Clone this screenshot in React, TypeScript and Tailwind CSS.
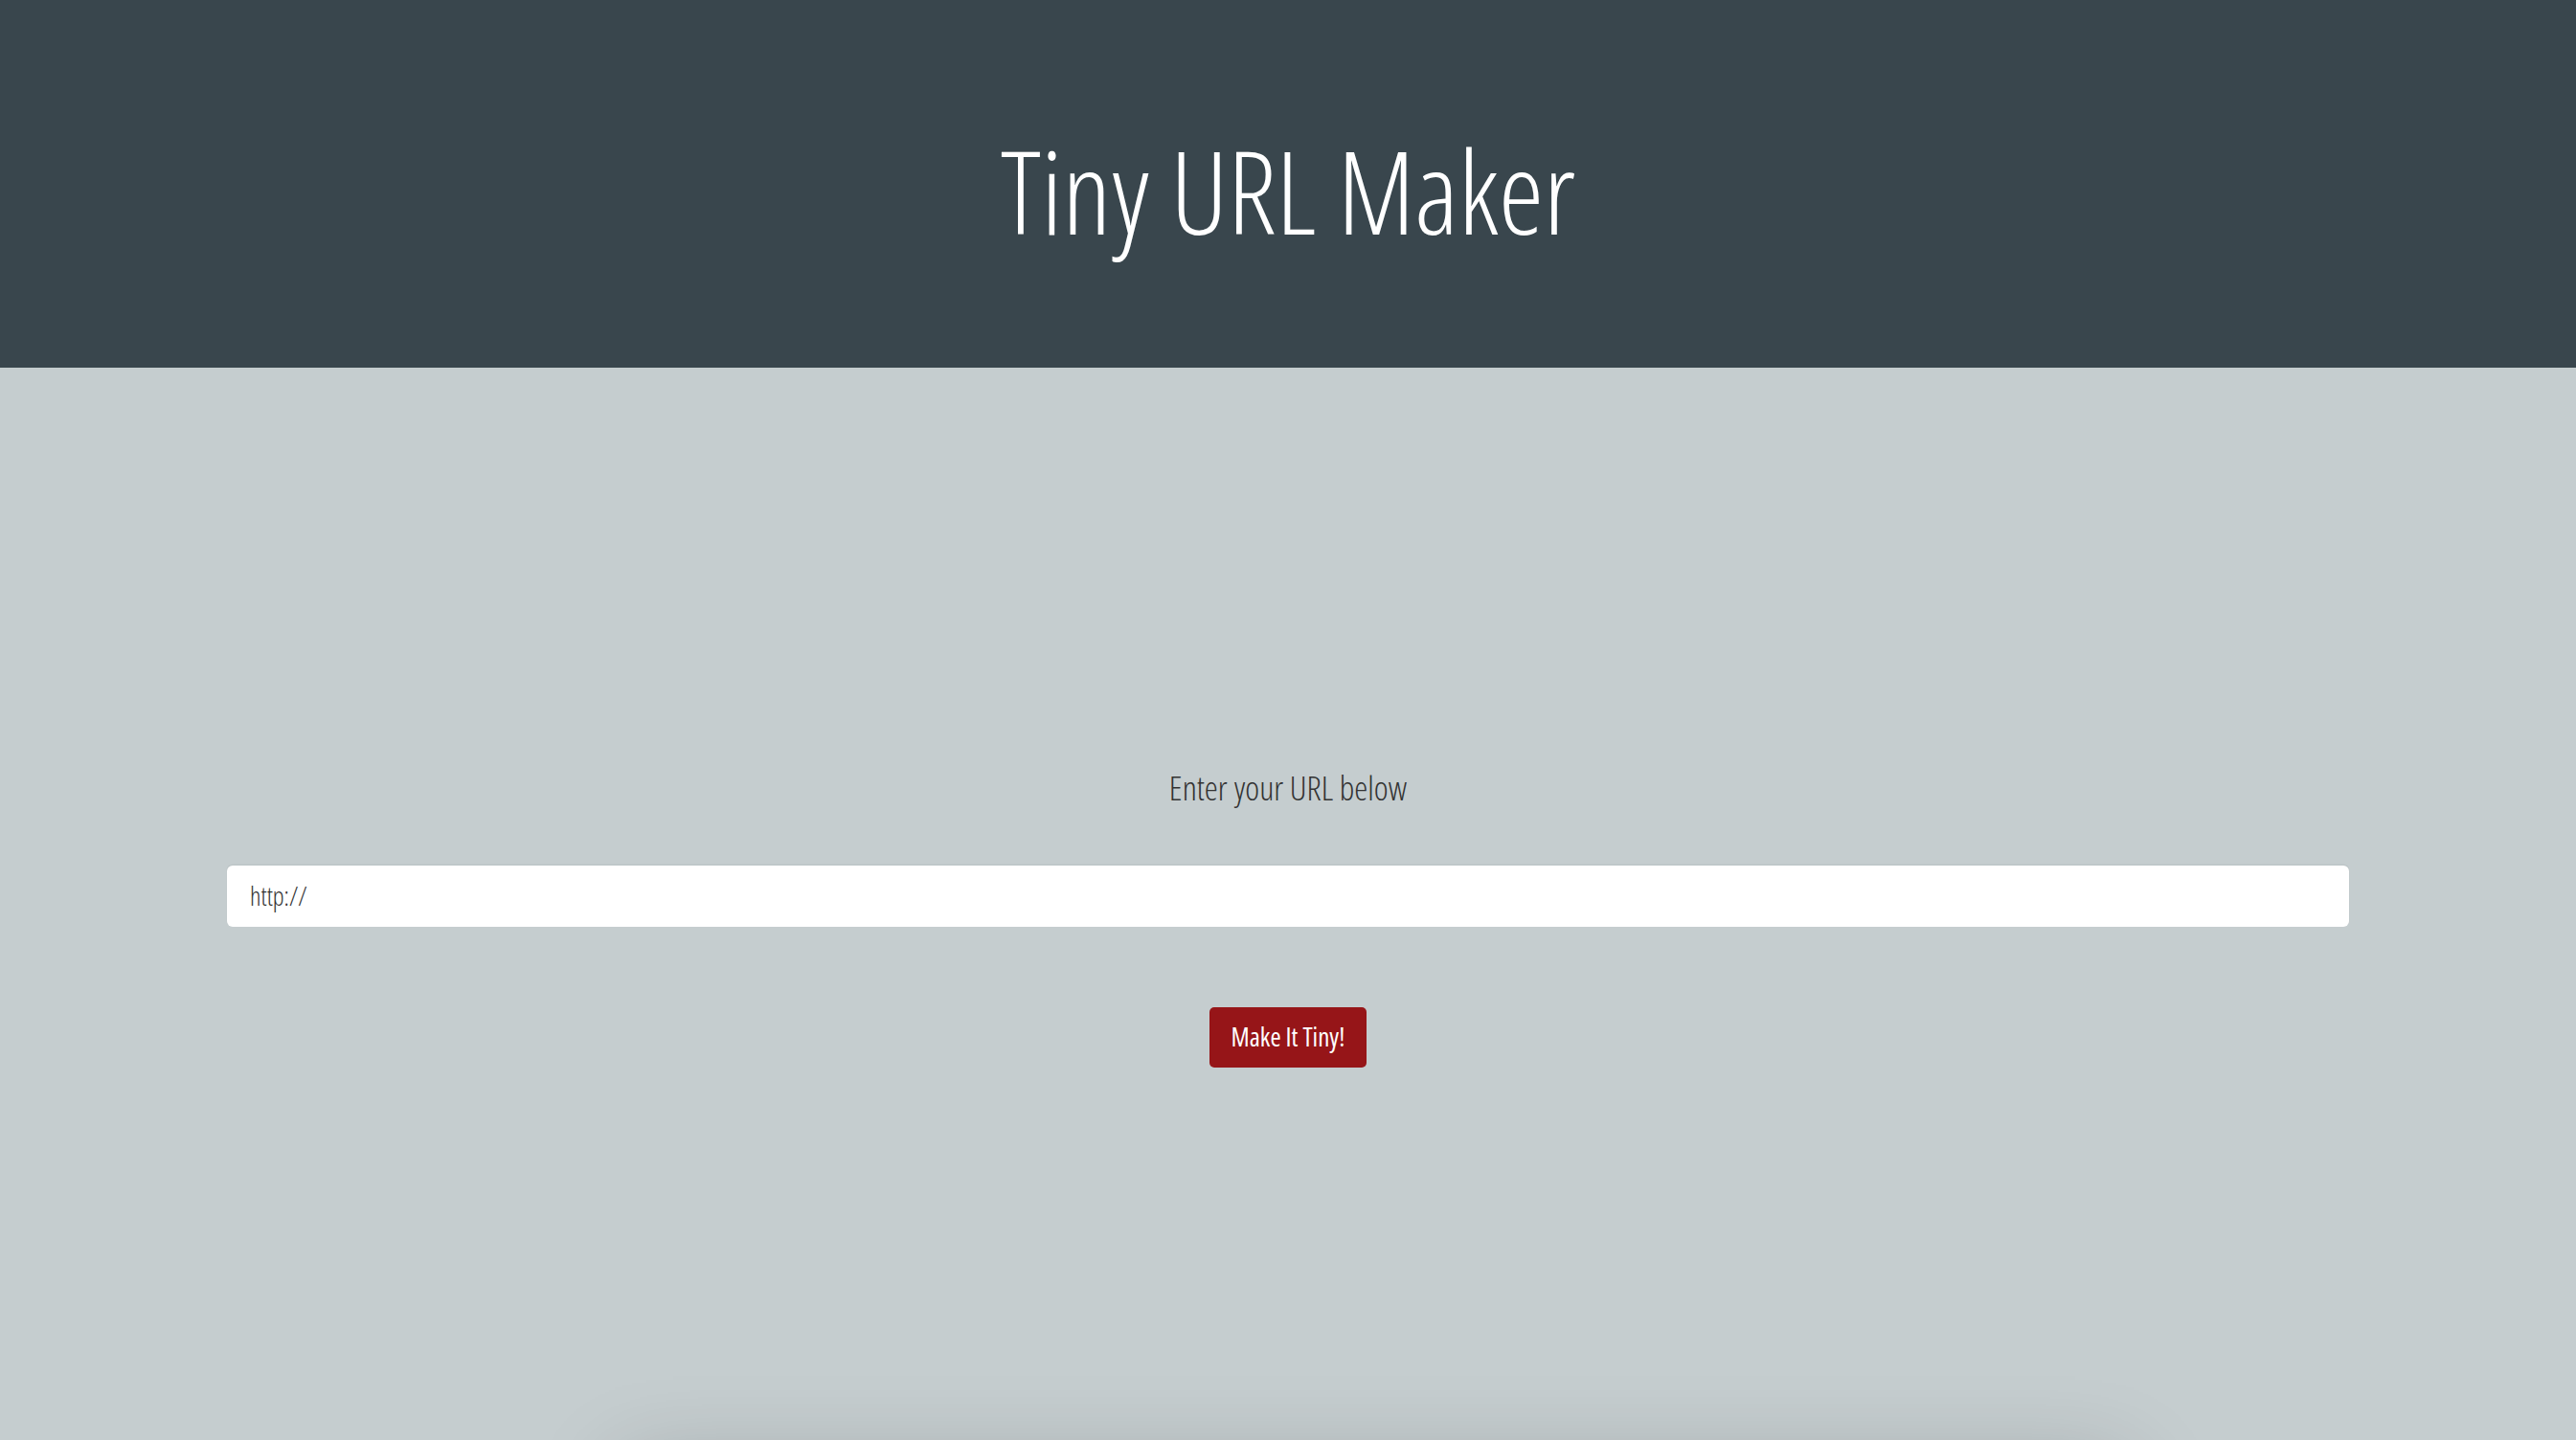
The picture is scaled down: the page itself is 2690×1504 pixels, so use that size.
export default function App() {
  return (
    <div
      className="min-h-screen overflow-hidden bg-[#c5cdcf]"
      style={{ fontFamily: '"Open Sans", "Liberation Sans", sans-serif', fontStretch: "75%" }}
    >
      <header className="flex h-[384px] items-center justify-center bg-[#39464d] pt-[14px]">
        <h1 className="text-[119px] leading-none font-light text-white">Tiny URL Maker</h1>
      </header>

      <main className="flex flex-col items-center px-[237px] pt-[421px]">
        <p className="text-[35.5px] leading-none font-light text-[#333]">Enter your URL below</p>
        <input
          type="text"
          defaultValue="http://"
          className="mt-[63px] h-[64px] w-full rounded-[6px] bg-white px-[24px] text-[27px] font-light text-[#333] shadow-[0_-1px_2px_rgba(0,0,0,0.06)] outline-none"
        />
        <button className="mt-[84px] h-[63px] w-[164px] rounded-[5px] bg-[#961518] text-[27px] font-normal text-white">
          Make It Tiny!
        </button>
      </main>

      <section className="mt-[420px] ml-[650px] mr-[470px] h-[300px] bg-[#c5cdcf] shadow-[0_0_90px_rgba(0,0,0,0.22)]" />
    </div>
  );
}
